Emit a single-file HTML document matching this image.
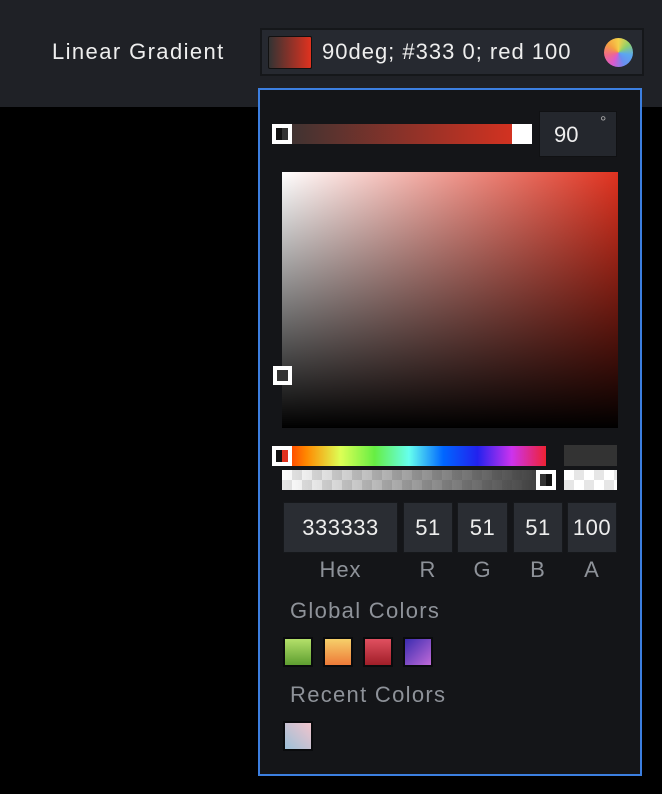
<!DOCTYPE html>
<html><head><style>
*{box-sizing:border-box;margin:0;padding:0}
body{width:662px;height:794px;background:#000;position:relative;overflow:hidden;font-family:"Liberation Sans",sans-serif;color:#fff}
.a{position:absolute}
.chk{background-color:#fff;background-image:linear-gradient(45deg,#e6e6e6 25%,transparent 25%,transparent 75%,#e6e6e6 75%),linear-gradient(45deg,#e6e6e6 25%,transparent 25%,transparent 75%,#e6e6e6 75%);background-size:20px 20px;background-position:0 0,10px 10px}
.inp{position:absolute;top:502px;height:51px;background:#2a2d33;border:1px solid #16181b;font-size:22px;text-align:center;line-height:49px;color:#eee;letter-spacing:0.5px}
.lbl{position:absolute;top:557px;font-size:22px;color:#8e9299;text-align:center;letter-spacing:1px}
.sw{position:absolute;width:30px;height:30px;border:2px solid #0a0b0d}
</style></head><body>
<div class="a" style="left:0;top:0;width:662px;height:107px;background:#1f2126"></div>
<div class="a" style="left:52px;top:39px;font-size:22px;color:#eee;letter-spacing:1.4px">Linear Gradient</div>
<div class="a" style="left:260px;top:28px;width:384px;height:48px;background:#262930;border:2px solid #15171a"></div>
<div class="a" style="left:268px;top:36px;width:44px;height:33px;border:1px solid #111;border-radius:2px;background:linear-gradient(90deg,#333,#e0321f)"></div>
<div class="a" style="left:322px;top:39px;font-size:22px;color:#eee;letter-spacing:1px">90deg; #333 0; red 100</div>
<div class="a" style="left:604px;top:38px;width:29px;height:29px;border-radius:50%;background:conic-gradient(#f5d04a,#8fd06a,#5aa8f0,#6a8ef0,#d95ad0,#f06a8a,#f5a040,#f5d04a)"></div>
<div class="a" style="left:258px;top:88px;width:384px;height:688px;background:#141518;border:2px solid #3c7fe0"></div>
<div class="a" style="left:272px;top:124px;width:260px;height:20px;background:linear-gradient(90deg,#333,#e0321f)"></div>
<div class="a" style="left:272px;top:124px;width:20px;height:20px;border:4px solid #fff;background:linear-gradient(90deg,#111 50%,#333 50%)"></div>
<div class="a" style="left:512px;top:124px;width:20px;height:20px;background:#fff"></div>
<div class="a" style="left:539px;top:111px;width:78px;height:46px;background:#24272d;border:1px solid #101113"></div>
<div class="a" style="left:554px;top:122px;font-size:22px;color:#eee">90</div>
<div class="a" style="left:600px;top:114px;font-size:16px;color:#aaa">°</div>
<div class="a" style="left:282px;top:172px;width:336px;height:256px;background:linear-gradient(to bottom,rgba(0,0,0,0),#000),linear-gradient(to right,#fff,#e0321f)"></div>
<div class="a" style="left:273px;top:366px;width:19px;height:19px;border:4px solid #fff;background:#333"></div>
<div class="a" style="left:272px;top:446px;width:274px;height:20px;background:linear-gradient(90deg,#f00,#f80,#df5,#6e4,#6fe,#06f,#22e,#c3e,#e23)"></div>
<div class="a" style="left:272px;top:446px;width:20px;height:20px;border:4px solid #fff;background:linear-gradient(90deg,#111 50%,#e0321f 50%)"></div>
<div class="a" style="left:564px;top:445px;width:53px;height:21px;background:#333"></div>
<div class="a chk" style="left:282px;top:470px;width:274px;height:20px"></div>
<div class="a" style="left:282px;top:470px;width:274px;height:20px;background:linear-gradient(90deg,rgba(51,51,51,0),#333)"></div>
<div class="a" style="left:536px;top:470px;width:20px;height:20px;border:4px solid #fff;background:linear-gradient(90deg,#333 50%,#111 50%)"></div>
<div class="a chk" style="left:564px;top:470px;width:53px;height:20px"></div>
<div class="inp" style="left:283px;width:115px">333333</div>
<div class="inp" style="left:403px;width:50px">51</div>
<div class="inp" style="left:457px;width:51px">51</div>
<div class="inp" style="left:513px;width:50px">51</div>
<div class="inp" style="left:567px;width:50px">100</div>
<div class="lbl" style="left:283px;width:115px">Hex</div>
<div class="lbl" style="left:403px;width:50px">R</div>
<div class="lbl" style="left:457px;width:51px">G</div>
<div class="lbl" style="left:513px;width:50px">B</div>
<div class="lbl" style="left:567px;width:50px">A</div>
<div class="a" style="left:290px;top:598px;font-size:22px;color:#8e9299;letter-spacing:1.3px">Global Colors</div>
<div class="sw" style="left:283px;top:637px;background:linear-gradient(#b4e06a,#5e9e30)"></div>
<div class="sw" style="left:323px;top:637px;background:linear-gradient(#f6d06a,#ee7a38)"></div>
<div class="sw" style="left:363px;top:637px;background:linear-gradient(#e05060,#a01e28)"></div>
<div class="sw" style="left:403px;top:637px;background:linear-gradient(135deg,#3a2cb0,#c06ad8)"></div>
<div class="a" style="left:290px;top:682px;font-size:22px;color:#8e9299;letter-spacing:1.3px">Recent Colors</div>
<div class="sw" style="left:283px;top:721px;background:linear-gradient(45deg,#9cc0d8,#f2c4cc)"></div>
</body></html>
